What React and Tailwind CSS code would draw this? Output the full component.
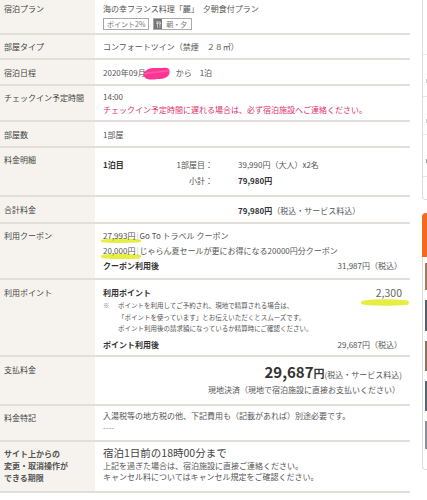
import React from "react";

function Row({ label, h, children, labelPt = "pt-[5px]", contentClass = "pt-[5px]" }) {
  return (
    <div className={`flex border-b-2 border-[#e2dfda] ${h}`}>
      <div className={`w-[95px] shrink-0 bg-[#f6f3ee] pl-[4px] ${labelPt} text-[8px] leading-[13px] text-[#444]`}>
        {label}
      </div>
      <div className={`flex-1 pl-[8px] pr-[8px] text-[8px] leading-[13px] text-[#555] relative ${contentClass}`}>
        {children}
      </div>
    </div>
  );
}

function Highlight({ className }) {
  return (
    <svg className={`absolute pointer-events-none ${className}`} viewBox="0 0 100 20" preserveAspectRatio="none">
      <path d="M4 8 C 20 4, 60 3, 96 7 C 99 9, 98 15, 94 16 C 60 18, 25 18, 5 15 C 1 14, 1 9, 4 8 Z" fill="#e3ec2e" opacity="0.9" />
    </svg>
  );
}

export default function App() {
  return (
    <div className="w-[427px] h-[500px] overflow-hidden bg-white flex font-['Noto_Sans_CJK_JP','Noto_Sans',sans-serif]">
      <div className="w-[410px] shrink-0 flex flex-col">
        {/* 宿泊プラン */}
        <Row label="宿泊プラン" h="h-[35px]" labelPt="pt-[2px]" contentClass="pt-[2px]">
          <div>海の幸フランス料理「麗」　夕朝食付プラン</div>
          <div className="flex items-center gap-[4px] mt-[3px]">
            <span className="border border-[#aaa] text-[7px] leading-[10px] px-[3px] text-[#777]">ポイント2%</span>
            <span className="flex items-stretch border border-[#aaa] text-[7px] leading-[10px] text-[#777]">
              <span className="bg-[#777] w-[8px] flex items-center justify-center">
                <svg width="5" height="7" viewBox="0 0 10 14">
                  <path d="M1 0 V5 Q1 6.5 2.5 6.5 V14 H3.5 V6.5 Q5 6.5 5 5 V0 H4.3 V4.5 H3.4 V0 H2.6 V4.5 H1.7 V0 Z" fill="#fff" />
                  <path d="M7 0 Q9.5 1 9.5 6 H8.5 V14 H7.5 Z" fill="#fff" />
                </svg>
              </span>
              <span className="px-[4px]">朝・夕</span>
            </span>
          </div>
        </Row>

        <Row label="部屋タイプ" h="h-[25px]">
          コンフォートツイン（禁煙　２８㎡）
        </Row>

        <Row label="宿泊日程" h="h-[26px]" labelPt="pt-[6px]" contentClass="pt-[6px]">
          <span className="relative">
            2020年09月<span className="inline-block w-[30px]" />
            <svg className="absolute left-[39px] top-[-1px] w-[30px] h-[15px]" viewBox="0 0 29 15">
              <path d="M3 5 C 6 1, 14 2, 20 2 C 25 1, 28 3, 27 7 C 26 11, 22 13, 15 13 C 9 14, 4 14, 2 11 C 0 9, 1 6, 3 5 Z" fill="#ff3593" />
              <path d="M2 8 C 8 6, 18 6, 26 5" stroke="#ff5aa6" strokeWidth="1.5" fill="none" />
            </svg>
          </span>
          <span>から　1泊</span>
        </Row>

        <Row label="チェックイン予定時間" h="h-[36px]" labelPt="pt-[5px]" contentClass="pt-[4px]">
          <div>14:00</div>
          <div className="text-[#e0306c]">チェックイン予定時間に遅れる場合は、必ず宿泊施設へご連絡ください。</div>
        </Row>

        <Row label="部屋数" h="h-[26px]" labelPt="pt-[6px]" contentClass="pt-[6px]">
          1部屋
        </Row>

        <Row label="料金明細" h="h-[49px]" labelPt="pt-[5px]" contentClass="pt-[9px]">
          <div className="flex leading-[16px]">
            <div className="w-[50px] font-bold text-[#333]">1泊目</div>
            <div className="w-[60px] text-right flex flex-col">
              <span>1部屋目：</span>
              <span>小計：</span>
            </div>
            <div className="ml-[25px] flex flex-col">
              <span>39,990円（大人）x2名</span>
              <span className="font-bold text-[#333]">79,980円</span>
            </div>
          </div>
        </Row>

        <Row label="合計料金" h="h-[27px]" labelPt="pt-[6px]" contentClass="pt-[7px]">
          <div className="pl-[135px]">
            <span className="font-bold text-[#333]">79,980円</span>（税込・サービス料込）
          </div>
        </Row>

        <Row label="利用クーポン" h="h-[56px]" labelPt="pt-[5px]" contentClass="pt-[4px]">
          <div className="relative leading-[15px]">
            <Highlight className="left-[-3px] top-[9px] w-[42px] h-[7px]" />
            <Highlight className="left-[-3px] top-[24px] w-[42px] h-[8px]" />
            <div className="relative">
              27,993円<span className="text-[#bbb] mx-[1px]">|</span>Go To トラベル クーポン
            </div>
            <div className="relative">
              20,000円<span className="text-[#bbb] mx-[1px]">|</span>じゃらん夏セールが更にお得になる20000円分クーポン
            </div>
            <div className="flex justify-between relative">
              <span className="font-bold text-[#333]">クーポン利用後</span>
              <span>31,987円（税込）</span>
            </div>
          </div>
        </Row>

        <Row label="利用ポイント" h="h-[77px]" labelPt="pt-[6px]" contentClass="pt-[6px]">
          <div className="relative">
            <Highlight className="right-[-8px] top-[11px] w-[50px] h-[10px]" />
            <div className="flex justify-between items-center relative">
              <span className="font-bold text-[#333]">利用ポイント</span>
              <span className="text-[10.5px] leading-[13px] text-[#666]">2,300</span>
            </div>
            <div className="flex text-[6.5px] leading-[11.5px] mt-[1px] text-[#555]">
              <span className="w-[15px] text-[#888]">※</span>
              <div>
                <div>ポイントを利用してご予約され、現地で精算される場合は、</div>
                <div>「ポイントを使っています」とお伝えいただくとスムーズです。</div>
                <div>ポイント利用後の請求額になっているか精算時にご確認ください。</div>
              </div>
            </div>
            <div className="flex justify-between mt-[3px]">
              <span className="font-bold text-[#333]">ポイント利用後</span>
              <span>29,687円（税込）</span>
            </div>
          </div>
        </Row>

        <Row label="支払料金" h="h-[49px]" labelPt="pt-[6px]" contentClass="pt-[5px]">
          <div className="flex flex-col items-end">
            <div className="flex items-baseline">
              <span className="text-[15px] leading-[20px] font-bold text-[#333]">29,687</span>
              <span className="text-[11px] font-bold text-[#333]">円</span>
              <span className="text-[8px]">(税込・サービス料込)</span>
            </div>
            <div className="mt-[1px] pr-[2px]">現地決済（現地で宿泊施設に直接お支払いください）</div>
          </div>
        </Row>

        <Row label="料金特記" h="h-[36px]" labelPt="pt-[5px]" contentClass="pt-[4px]">
          <div className="leading-[12px]">
            <div>入湯税等の地方税の他、下記費用も（記載があれば）別途必要です。</div>
            <div className="text-[#888]">----</div>
          </div>
        </Row>

        <Row
          label={
            <div className="font-bold text-[#555] leading-[12px] pt-[1px]">
              サイト上からの<br />変更・取消操作が<br />できる期限
            </div>
          }
          h="h-[51px]"
          labelPt="pt-[5px]"
          contentClass="pt-[4px]"
        >
          <div className="text-[10.5px] leading-[14px] text-[#444]">宿泊1日前の18時00分まで</div>
          <div className="leading-[11px]">上記を過ぎた場合は、宿泊施設に直接ご連絡ください。</div>
          <div className="leading-[11px]">キャンセル料についてはキャンセル規定をご確認ください。</div>
        </Row>
      </div>

      {/* sidebar (mostly cropped) */}
      <div className="ml-[12px] w-[120px] shrink-0 flex flex-col">
        <div className="h-[200px] border border-t-0 border-[#ddd] rounded-b-[4px] flex flex-col">
          <div className="h-[55px] border-b border-[#e6e6e6]" />
          <div className="h-[42px] border-b border-[#e6e6e6] pl-[3px] pt-[24px]">
            <div className="w-[3px] h-[4px] bg-[#ccc]" />
          </div>
          <div className="h-[38px] border-b border-[#e6e6e6] pl-[3px] pt-[22px]">
            <div className="w-[3px] h-[4px] bg-[#ccc]" />
          </div>
          <div className="h-[42px] border-b border-[#e6e6e6] pl-[3px] pt-[24px]">
            <div className="w-[3px] h-[4px] bg-[#999]" />
          </div>
        </div>
        <div className="mt-[13px] h-[44px] bg-[#f26a1b] rounded-t-[4px]" />
        <div className="h-[213px] border border-t-0 border-[#ddd] rounded-b-[4px] flex flex-col gap-[10px] pt-[6px] pl-[2px]">
          <div className="h-[27px] w-[40px] bg-[#a07a5c]" />
          <div className="h-[31px] w-[40px] bg-[#5a5f6a]" />
          <div className="h-[30px] w-[40px] bg-[#8c7462]" />
          <div className="h-[30px] w-[40px] bg-[#596270]" />
          <div className="h-[28px] w-[40px] bg-[#8d8f96]" />
        </div>
      </div>
    </div>
  );
}
